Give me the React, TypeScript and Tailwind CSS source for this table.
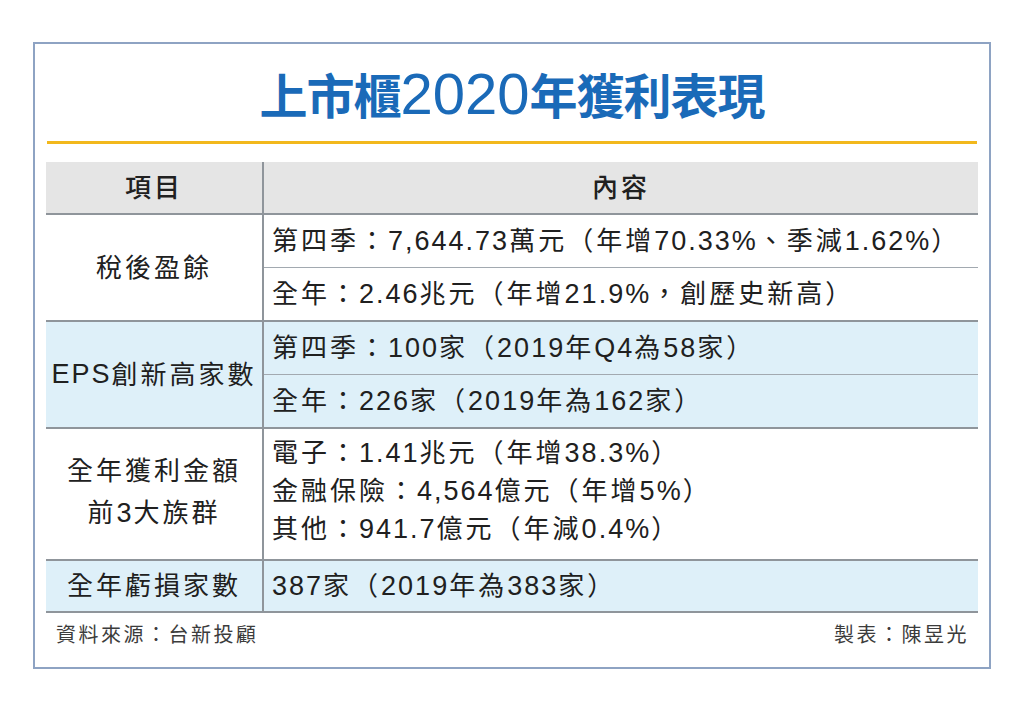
import React from "react";

const font = "font-['Liberation_Sans','Noto_Sans_CJK_TC',sans-serif]";

function Txt({ s }: { s: string }) {
  const parts = s.match(/[\x20-\x7e]+|[^\x20-\x7e]+/g) || [];
  return (
    <>
      {parts.map((p, i) =>
        /^[\x20-\x7e]+$/.test(p) ? (
          <span key={i} className="text-[27px] tracking-[2px]">
            {p}
          </span>
        ) : (
          <span key={i}>{p}</span>
        )
      )}
    </>
  );
}

function Line({ s }: { s: string }) {
  return (
    <div className="whitespace-nowrap">
      <Txt s={s} />
    </div>
  );
}

export default function App() {
  return (
    <div className={`w-[1024px] h-[703px] bg-white ${font} text-[#202020]`}>
      <div className="ml-[33px] pt-[42px]">
        <div className="w-[958px] h-[627px] border-2 border-[#8ea3c3] flex flex-col px-[11px]">
          {/* Title */}
          <div className="h-[97px] flex items-center justify-center pt-[2px]">
            <h1 className="text-[48px] font-bold tracking-[-1px] text-[#1a6ab8] leading-none whitespace-nowrap">
              上市櫃<span className="text-[58px] font-normal font-['Liberation_Sans',sans-serif] tracking-[0px]">2020</span>年獲利表現
            </h1>
          </div>
          <div className="h-[3px] bg-[#f2b81c] mx-[1px]" />

          {/* Table */}
          <div className="mt-[18px] text-[26px] tracking-[3px] leading-none">
            {/* Header */}
            <div className="flex h-[53px] bg-[#e5e5e5] border-b-2 border-[#8f959b] font-medium">
              <div className="w-[218px] border-r-2 border-[#8f959b] flex items-center justify-center">項目</div>
              <div className="flex-1 flex items-center justify-center">內容</div>
            </div>

            {/* Row 1 */}
            <div className="flex h-[107px] border-b-2 border-[#8f959b] bg-white">
              <div className="w-[218px] border-r-2 border-[#8f959b] flex items-center justify-center">稅後盈餘</div>
              <div className="flex-1 flex flex-col">
                <div className="h-[53px] border-b border-[#a2a9b0] flex items-center pl-[8px]">
                  <Line s="第四季：7,644.73萬元（年增70.33%、季減1.62%）" />
                </div>
                <div className="flex-1 flex items-center pl-[8px]">
                  <Line s="全年：2.46兆元（年增21.9%，創歷史新高）" />
                </div>
              </div>
            </div>

            {/* Row 2 */}
            <div className="flex h-[107px] border-b-2 border-[#8f959b] bg-[#def0f9]">
              <div className="w-[218px] border-r-2 border-[#8f959b] flex items-center justify-center whitespace-nowrap">
                <Txt s="EPS創新高家數" />
              </div>
              <div className="flex-1 flex flex-col">
                <div className="h-[53px] border-b border-[#a2a9b0] flex items-center pl-[8px]">
                  <Line s="第四季：100家（2019年Q4為58家）" />
                </div>
                <div className="flex-1 flex items-center pl-[8px]">
                  <Line s="全年：226家（2019年為162家）" />
                </div>
              </div>
            </div>

            {/* Row 3 */}
            <div className="flex h-[132px] border-b-2 border-[#8f959b] bg-white">
              <div className="w-[218px] border-r-2 border-[#8f959b] flex flex-col items-center justify-center leading-[42px] pb-[4px]">
                <div>全年獲利金額</div>
                <div>
                  <Txt s="前3大族群" />
                </div>
              </div>
              <div className="flex-1 flex flex-col pl-[8px] pt-[5px] leading-[38px]">
                <Line s="電子：1.41兆元（年增38.3%）" />
                <Line s="金融保險：4,564億元（年增5%）" />
                <Line s="其他：941.7億元（年減0.4%）" />
              </div>
            </div>

            {/* Row 4 */}
            <div className="flex h-[52px] border-b-2 border-[#8f959b] bg-[#def0f9]">
              <div className="w-[218px] border-r-2 border-[#8f959b] flex items-center justify-center whitespace-nowrap">全年虧損家數</div>
              <div className="flex-1 flex items-center pl-[8px]">
                <Line s="387家（2019年為383家）" />
              </div>
            </div>
          </div>

          {/* Footer */}
          <div className="mt-[10px] flex justify-between text-[20px] leading-[24px] tracking-[2.5px] text-[#3c3c3c] pl-[10px] pr-[9px]">
            <span>資料來源：台新投顧</span>
            <span>製表：陳昱光</span>
          </div>
        </div>
      </div>
    </div>
  );
}
